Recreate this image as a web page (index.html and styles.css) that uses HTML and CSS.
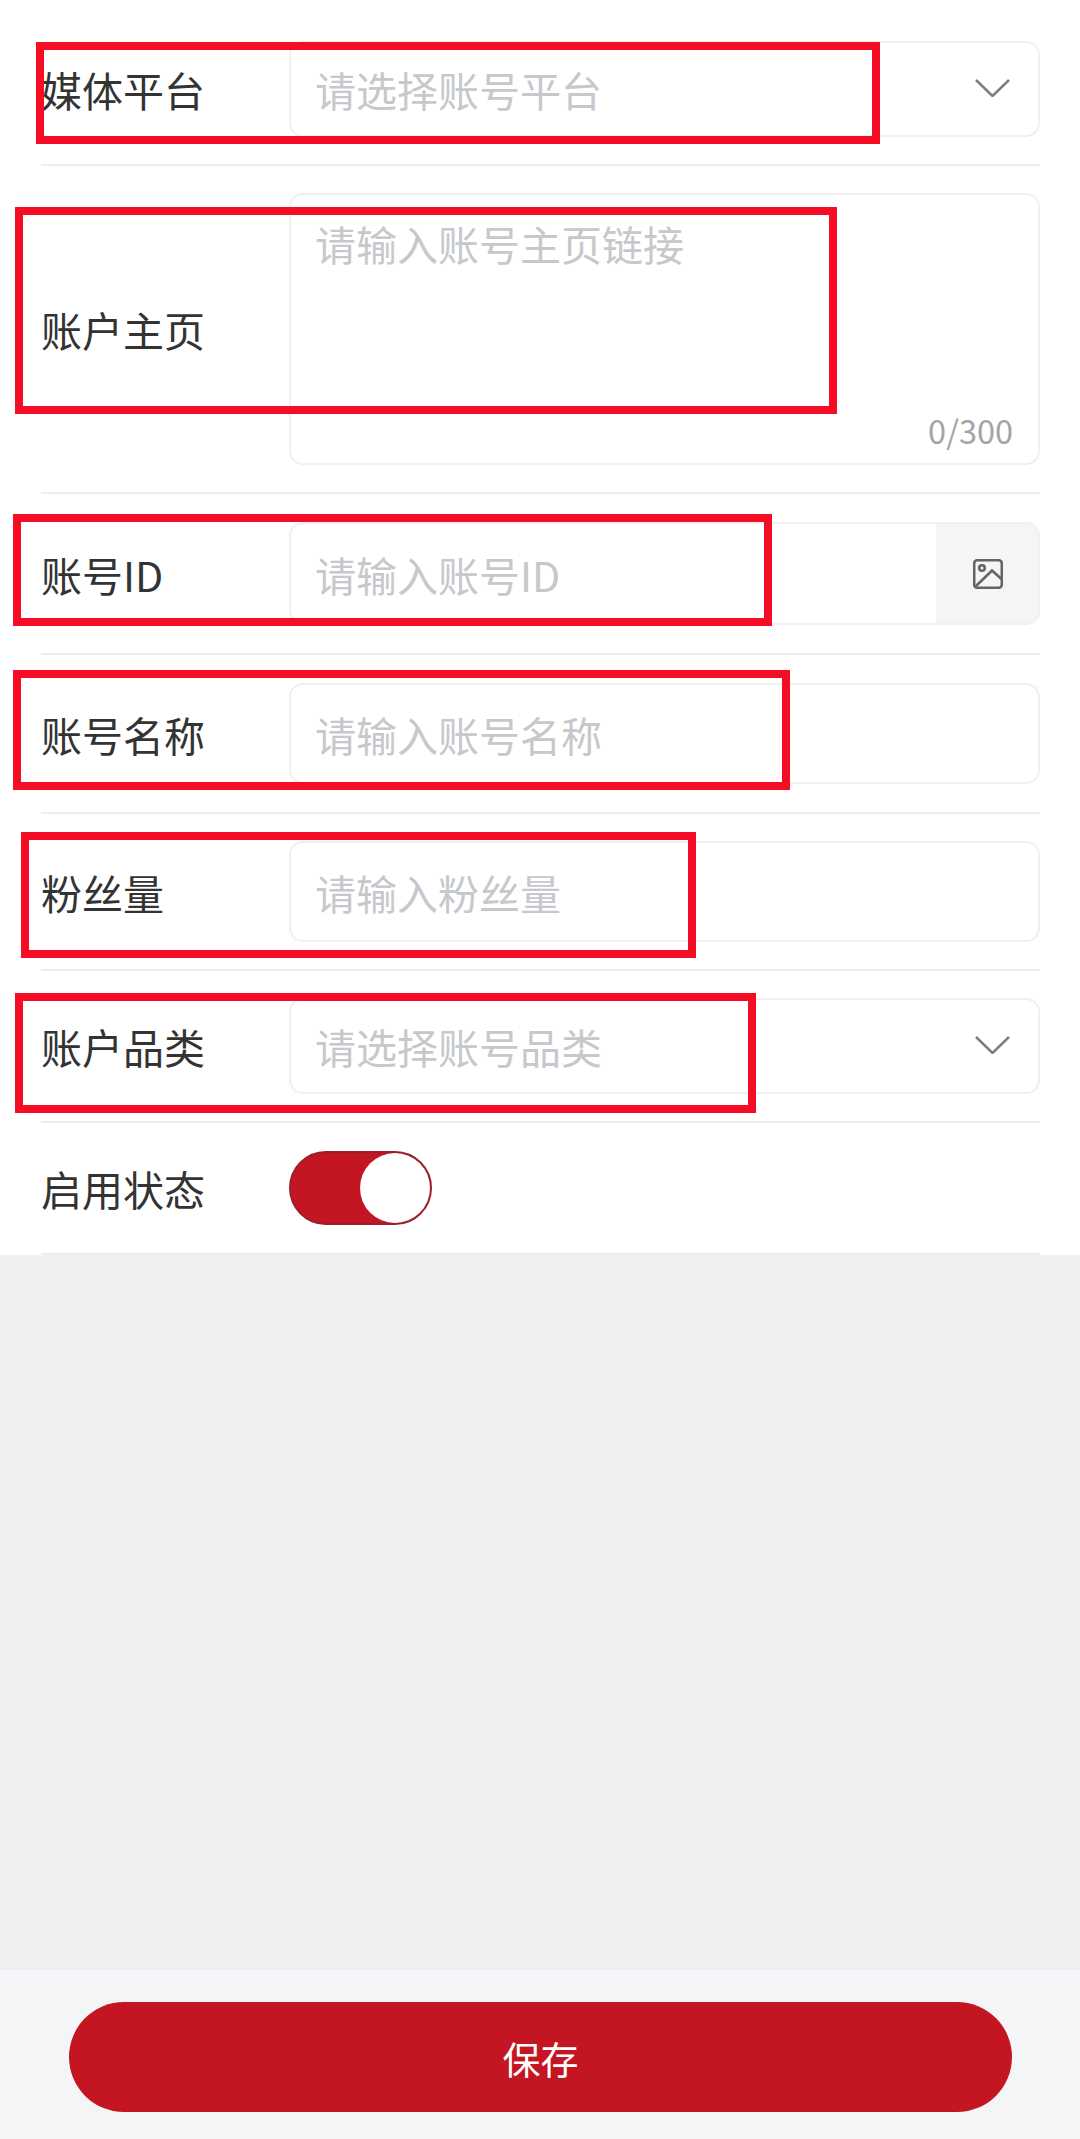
FILE: index.html
```html
<!DOCTYPE html>
<html lang="zh">
<head>
    <meta charset="utf-8">
    <title>账号信息</title>
    <link rel="stylesheet" href="styles.css">
</head>
<body>
    <div class="page">
        <form class="form">
            <div class="row row-select row-first">
                <label class="label">媒体平台</label>
                <div class="field">
                    <input class="input" placeholder="请选择账号平台" readonly>
                    <svg class="chevron" viewBox="0 0 35 18"><path d="M1 1 L17.5 17 L34 1"/></svg>
                </div>
            </div>
            <div class="row row-area row-tight">
                <label class="label">账户主页</label>
                <div class="field field-area">
                    <textarea class="textarea" placeholder="请输入账号主页链接"></textarea>
                    <span class="count">0/300</span>
                </div>
            </div>
            <div class="row row-id">
                <label class="label">账号ID</label>
                <div class="field">
                    <input class="input" placeholder="请输入账号ID">
                    <div class="addon">
                        <svg class="pic" viewBox="0 0 30 30">
                            <rect x="1.2" y="1.2" width="27.6" height="27.6" rx="3"/>
                            <circle cx="9" cy="9" r="2.8"/>
                            <path d="M3 27 L19 11.5 L28.5 20"/>
                        </svg>
                    </div>
                </div>
            </div>
            <div class="row row-input">
                <label class="label">账号名称</label>
                <div class="field">
                    <input class="input" placeholder="请输入账号名称">
                </div>
            </div>
            <div class="row row-input row-tight">
                <label class="label">粉丝量</label>
                <div class="field">
                    <input class="input" placeholder="请输入粉丝量">
                </div>
            </div>
            <div class="row row-select row-tight">
                <label class="label">账户品类</label>
                <div class="field">
                    <input class="input" placeholder="请选择账号品类" readonly>
                    <svg class="chevron" viewBox="0 0 35 18"><path d="M1 1 L17.5 17 L34 1"/></svg>
                </div>
            </div>
            <div class="row">
                <label class="label">启用状态</label>
                <div class="switch"><span class="knob"></span></div>
            </div>
        </form>
        <div class="spacer"></div>
        <div class="footer">
            <button class="save" type="button">保存</button>
        </div>

        <!-- red annotation boxes drawn over the form -->
        <div class="mark mark-1"></div>
        <div class="mark mark-2"></div>
        <div class="mark mark-3"></div>
        <div class="mark mark-4"></div>
        <div class="mark mark-5"></div>
        <div class="mark mark-6"></div>
    </div>
</body>
</html>
```

FILE: styles.css
```css
* {
    box-sizing: border-box;
}

body {
    margin: 0;
    font-family: "Noto Sans CJK SC", "Noto Sans", sans-serif;
    color: #333;
    background-color: #fff;
}

.page {
    position: relative;
    display: flex;
    flex-direction: column;
    min-height: 100vh;
}

.form {
    background-color: #fff;
    padding: 13px 40px 0 41px;
}

.row {
    display: flex;
    align-items: center;
    padding: 28px 0;
    border-bottom: 2px solid #ebedf0;
}

.row-tight {
    padding: 27px 0;
}

.row-select .field {
    height: 96px;
}

.row-first {
    padding-bottom: 27px;
}

.row-area .field {
    height: 272px;
}

.row-id .field {
    height: 103px;
}

.row-input .field {
    height: 101px;
}

.label {
    flex: 0 0 248px;
    font-size: 41px;
    line-height: 56px;
    color: #333;
}

.field {
    flex: 1;
    display: flex;
    align-items: center;
    border: 2px solid #eef0f2;
    border-radius: 14px;
    overflow: hidden;
    position: relative;
}

.input,
.textarea {
    flex: 1;
    min-width: 0;
    border: none;
    outline: none;
    background: transparent;
    font-family: inherit;
    font-size: 41px;
    color: #333;
    padding: 0 0 0 24px;
}

.input {
    height: 100%;
}

.textarea {
    align-self: stretch;
    resize: none;
    padding-top: 19px;
    line-height: 58px;
}

.input::placeholder,
.textarea::placeholder {
    color: #c6c8cc;
    opacity: 1;
}

.chevron {
    flex: none;
    width: 35px;
    height: 18px;
    margin: 0 28px 2px 0;
    fill: none;
    stroke: #7d7e80;
    stroke-width: 2.5;
}

.count {
    position: absolute;
    right: 25px;
    bottom: 10px;
    font-size: 32.5px;
    line-height: 46px;
    color: #a3a5a8;
}

.addon {
    flex: none;
    align-self: stretch;
    width: 102px;
    background-color: #f4f5f7;
    display: flex;
    align-items: center;
    justify-content: center;
}

.pic {
    width: 30px;
    height: 30px;
    margin-left: 2px;
    fill: none;
    stroke: #646566;
    stroke-width: 2.6;
}

.switch {
    width: 143px;
    height: 74px;
    border-radius: 37px;
    background-color: #c41622;
    border: 2px solid #9b1f2b;
    display: flex;
    justify-content: flex-end;
}

.knob {
    width: 70px;
    height: 70px;
    border-radius: 50%;
    background-color: #fff;
}

.spacer {
    flex: 1;
    background-color: #f0f0f0;
}

.footer {
    height: 171px;
    padding: 32px 68px 0 69px;
    background-color: #f4f5f7;
    border-top: 2px solid #ebedf0;
}

.save {
    display: block;
    width: 100%;
    height: 110px;
    border: none;
    border-radius: 55px;
    background-color: #c41622;
    color: #fff;
    font-family: inherit;
    font-size: 38px;
}

.mark {
    position: absolute;
    border: 8px solid #f50d25;
}

.mark-1 { left: 36px; top: 42px; width: 844px; height: 102px; }
.mark-2 { left: 15px; top: 207px; width: 822px; height: 207px; }
.mark-3 { left: 13px; top: 514px; width: 759px; height: 112px; }
.mark-4 { left: 13px; top: 670px; width: 777px; height: 120px; }
.mark-5 { left: 21px; top: 832px; width: 675px; height: 126px; }
.mark-6 { left: 15px; top: 993px; width: 741px; height: 120px; }
```
